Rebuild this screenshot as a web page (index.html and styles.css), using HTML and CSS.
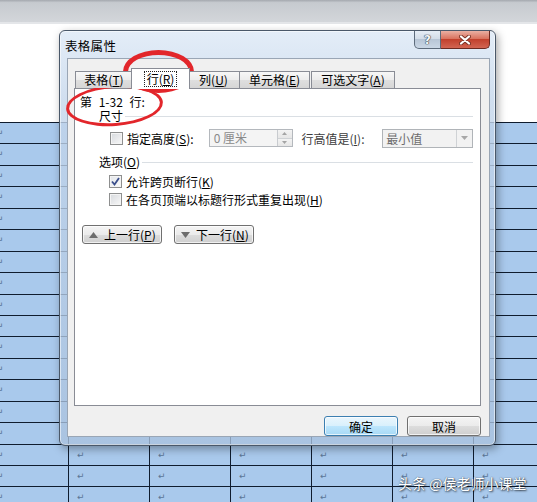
FILE: index.html
```html
<!DOCTYPE html>
<html lang="zh-CN">

<head>
    <meta charset="UTF-8">
    <meta name="viewport" content="width=device-width, initial-scale=1.0">
    <title>表格属性</title>
    <link rel="stylesheet" href="styles.css">
</head>

<body>
    <div class="screen">
        <div class="ribbon"></div>
        <div class="doc-top"></div>

        <!-- only the cell marks outside the dialog are visible -->
        <div class="doc-table">
            <div class="row"><span>↵</span><span></span><span></span><span></span><span></span><span></span><span></span></div>
            <div class="row"><span>↵</span><span></span><span></span><span></span><span></span><span></span><span></span></div>
            <div class="row"><span>↵</span><span></span><span></span><span></span><span></span><span></span><span></span></div>
            <div class="row"><span>↵</span><span></span><span></span><span></span><span></span><span></span><span></span></div>
            <div class="row"><span>↵</span><span></span><span></span><span></span><span></span><span></span><span></span></div>
            <div class="row"><span>↵</span><span></span><span></span><span></span><span></span><span></span><span></span></div>
            <div class="row"><span>↵</span><span></span><span></span><span></span><span></span><span></span><span></span></div>
            <div class="row"><span>↵</span><span></span><span></span><span></span><span></span><span></span><span></span></div>
            <div class="row"><span>↵</span><span></span><span></span><span></span><span></span><span></span><span></span></div>
            <div class="row"><span>↵</span><span></span><span></span><span></span><span></span><span></span><span></span></div>
            <div class="row"><span>↵</span><span></span><span></span><span></span><span></span><span></span><span></span></div>
            <div class="row"><span>↵</span><span></span><span></span><span></span><span></span><span></span><span></span></div>
            <div class="row"><span>↵</span><span></span><span></span><span></span><span></span><span></span><span></span></div>
            <div class="row"><span>↵</span><span></span><span></span><span></span><span></span><span></span><span></span></div>
            <div class="row"><span>↵</span><span></span><span></span><span></span><span></span><span></span><span></span></div>
            <div class="row"><span>↵</span><span>↵</span><span>↵</span><span>↵</span><span>↵</span><span>↵</span><span>↵</span></div>
            <div class="row"><span>↵</span><span>↵</span><span>↵</span><span>↵</span><span>↵</span><span>↵</span><span>↵</span></div>
            <div class="row"><span>↵</span><span>↵</span><span>↵</span><span>↵</span><span>↵</span><span>↵</span><span>↵</span></div>
        </div>

        <!-- table properties dialog -->
        <div class="dialog">
            <div class="title-bar">
                <span class="title">表格属性</span>
                <div class="title-buttons">
                    <span class="btn-help">?</span>
                    <span class="btn-close">
                        <svg width="12" height="10" viewBox="0 0 12 10">
                            <path d="M2 1.5 L10 8.5 M10 1.5 L2 8.5" stroke="#7a3326" stroke-width="4" stroke-linecap="round" />
                            <path d="M2 1.5 L10 8.5 M10 1.5 L2 8.5" stroke="#ffffff" stroke-width="2.2" stroke-linecap="round" />
                        </svg>
                    </span>
                </div>
            </div>

            <div class="frame">
                <div class="tabs">
                    <span class="tab tab-table">表格(<u>T</u>)</span>
                    <span class="tab tab-active"><span class="focus">行(<u>R</u>)</span></span>
                    <span class="tab tab-col">列(<u>U</u>)</span>
                    <span class="tab tab-cell">单元格(<u>E</u>)</span>
                    <span class="tab tab-alt">可选文字(<u>A</u>)</span>
                </div>

                <div class="tab-page">
                    <div class="range">第 1-32 行:</div>

                    <div class="group-head">尺寸</div>
                    <div class="field-row">
                        <span class="checkbox"></span>
                        <span class="label-height">指定高度(<u>S</u>):</span>
                        <span class="spin-input">
                            <span class="spin-value">0 厘米</span>
                            <span class="spin-arrows">
                                <span><svg width="5" height="3" viewBox="0 0 5 3"><path d="M0 3 L2.5 0 L5 3 Z" fill="#a4a4a4" /></svg></span>
                                <span><svg width="5" height="3" viewBox="0 0 5 3"><path d="M0 0 L2.5 3 L5 0 Z" fill="#a4a4a4" /></svg></span>
                            </span>
                        </span>
                        <span class="label-rule">行高值是(<u>I</u>):</span>
                        <span class="select">
                            <span class="select-value">最小值</span>
                            <span class="select-arrow"><svg width="7" height="4" viewBox="0 0 7 4"><path d="M0 0 L3.5 4 L7 0 Z" fill="#a8a8a8" /></svg></span>
                        </span>
                    </div>

                    <div class="group-head">选项(<u>O</u>)</div>
                    <div class="check-row first">
                        <span class="checkbox checked">
                            <svg width="11" height="11" viewBox="0 0 11 11"><path d="M2 5.5 L4.5 8.5 L9 2" fill="none" stroke="#3b4f8c" stroke-width="1.8" /></svg>
                        </span>
                        <span>允许跨页断行(<u>K</u>)</span>
                    </div>
                    <div class="check-row">
                        <span class="checkbox"></span>
                        <span>在各页顶端以标题行形式重复出现(<u>H</u>)</span>
                    </div>

                    <div class="nav-buttons">
                        <button class="nav-btn">
                            <svg width="9" height="6" viewBox="0 0 9 6"><path d="M0 6 L4.5 0 L9 6 Z" fill="#6d6d6d" /></svg>
                            <span>上一行(<u>P</u>)</span>
                        </button>
                        <button class="nav-btn">
                            <svg width="9" height="6" viewBox="0 0 9 6"><path d="M0 0 L4.5 6 L9 0 Z" fill="#6d6d6d" /></svg>
                            <span>下一行(<u>N</u>)</span>
                        </button>
                    </div>
                </div>

                <div class="dialog-buttons">
                    <button class="btn btn-default">确定</button>
                    <button class="btn">取消</button>
                </div>
            </div>
        </div>

        <!-- red hand-drawn marks -->
        <div class="mark mark-tab"></div>
        <div class="mark mark-rows"></div>

        <div class="watermark">头条 @侯老师小课堂</div>
    </div>
</body>

</html>
```

FILE: styles.css
```css
:root {
    --cell-blue: #a9c9ec;
    --grid-line: #0f1c2e;
    --tab-border: #898c95;
    --mark-red: #e2262b;
}

* {
    box-sizing: border-box;
    margin: 0;
    padding: 0;
}

body {
    font-family: "Noto Sans CJK SC", "DejaVu Sans", sans-serif;
    font-size: 12px;
    color: #000;
    background: #fff;
}

.screen {
    position: relative;
    width: 537px;
    height: 502px;
    overflow: hidden;
}

u {
    text-decoration: underline;
    text-underline-offset: 1px;
}

/* document behind the dialog */
.ribbon {
    height: 24px;
    background: linear-gradient(#a4a8ae, #c6cacf 12%, #d3d6da);
    border-bottom: 2px solid #e4e6e9;
}

.doc-top {
    height: 98px;
    background: #fff;
}

.doc-table {
    margin-left: -13px;
}

.row {
    display: flex;
    height: 21.45px;
    border-top: 1px solid var(--grid-line);
    background: var(--cell-blue);
}

.row span {
    width: 81px;
    flex: none;
    border-left: 1px solid var(--grid-line);
    padding: 4px 0 0 8px;
    font-family: "DejaVu Sans", sans-serif;
    font-size: 9px;
    line-height: 12px;
    color: #5b7696;
}

/* dialog */
.dialog {
    position: absolute;
    left: 59px;
    top: 30px;
    width: 437px;
    height: 416px;
    display: flex;
    flex-direction: column;
    border: 1px solid #4a5869;
    border-radius: 6px;
    background: linear-gradient(rgba(226, 236, 247, 0.95), rgba(196, 214, 235, 0.8) 70px, rgba(170, 194, 222, 0.78));
    box-shadow: inset 0 0 0 1px rgba(255, 255, 255, 0.55), 2px 3px 9px rgba(0, 0, 0, 0.35);
}

.title-bar {
    height: 27px;
    display: flex;
    align-items: flex-start;
    padding-left: 5px;
}

.title {
    margin-top: 8px;
    font-size: 12.5px;
    line-height: 14px;
    letter-spacing: 0.3px;
}

.title-buttons {
    margin-left: auto;
    margin-right: 5px;
    display: flex;
}

.btn-help,
.btn-close {
    height: 18px;
    display: flex;
    align-items: center;
    justify-content: center;
}

.btn-help {
    width: 27px;
    border: 1px solid #5d6b7b;
    border-top: none;
    border-radius: 0 0 0 5px;
    background: linear-gradient(#e6edf5, #d3dde8 45%, #b8c6d6 50%, #cad7e5);
    font-family: "DejaVu Sans", sans-serif;
    font-weight: bold;
    font-size: 12px;
    color: #f4f6f8;
    text-shadow: 0 0 1px #34404e, 0 0 1px #34404e, 0 0 1px #34404e;
}

.btn-close {
    width: 49px;
    border: 1px solid #6d2a21;
    border-top: none;
    border-left: none;
    border-radius: 0 0 5px 0;
    background: linear-gradient(#eab0a3, #d9735f 45%, #c2412d 50%, #d26552);
}

.frame {
    flex: 1;
    margin: 0 5px 8px 7px;
    padding: 9px 8px 0 6px;
    display: flex;
    flex-direction: column;
    background: #f0f0f0;
    border: 1px solid #9aa6b5;
}

/* tabs */
.tabs {
    display: flex;
    align-items: flex-end;
    height: 21px;
    padding-left: 1px;
    position: relative;
    z-index: 1;
}

.tab {
    height: 17px;
    margin-bottom: 1px;
    margin-left: -1px;
    display: flex;
    align-items: center;
    justify-content: center;
    border: 1px solid var(--tab-border);
    border-bottom: none;
    background: linear-gradient(#f7f7f7, #ececec 50%, #dfdfdf 50%, #d6d6d6);
    line-height: 14px;
    white-space: nowrap;
}

.tab-table {
    width: 58px;
    margin-left: 0;
}

.tab-active {
    width: 59px;
    height: 21px;
    margin: 0 -2px 0 -2px;
    background: #fff;
    position: relative;
    z-index: 2;
}

.tab-col {
    width: 53px;
}

.tab-cell {
    width: 71px;
}

.tab-alt {
    width: 84px;
    margin-left: 1px;
}

.focus {
    padding: 0 2px;
    outline: 1px dotted #222;
    outline-offset: 0;
}

.tab-page {
    height: 318px;
    margin-top: -1px;
    padding: 6px 7px 0 5px;
    background: #fff;
    border: 1px solid var(--tab-border);
}

.range {
    line-height: 14px;
    font-size: 12px;
    word-spacing: 4px;
}

.group-head {
    display: flex;
    align-items: center;
    margin-left: 19px;
    line-height: 14px;
}

.group-head::after {
    content: "";
    flex: 1;
    height: 1px;
    margin-left: 2px;
    background: #dadfe4;
}

.group-head+.check-row,
.field-row+.group-head {
    margin-top: 8px;
}

.field-row {
    display: flex;
    align-items: center;
    height: 18px;
    margin-top: 6px;
}

.field-row .checkbox {
    margin-left: 30px;
}

.checkbox {
    width: 13px;
    height: 13px;
    flex: none;
    display: flex;
    align-items: center;
    justify-content: center;
    border: 1px solid #8e8f8f;
    background: linear-gradient(135deg, #d6d9dd, #f8f8f8);
    box-shadow: inset 0 0 0 1px #f4f4f4;
}

.checkbox.checked {
    background: linear-gradient(135deg, #e2e5e9, #fbfbfb);
}

.label-height {
    width: 82px;
    margin-left: 4px;
    white-space: nowrap;
}

.spin-input {
    width: 84px;
    height: 18px;
    display: flex;
    border: 1px solid #b4b8bd;
    background: #f4f4f4;
}

.spin-value {
    flex: 1;
    padding-left: 4px;
    line-height: 16px;
    color: #8a8a8a;
}

.spin-arrows {
    width: 15px;
    display: flex;
    flex-direction: column;
    border-left: 1px solid #c8cbcf;
}

.spin-arrows span {
    flex: 1;
    display: flex;
    align-items: center;
    justify-content: center;
    background: linear-gradient(#f3f3f3, #e6e6e6);
}

.spin-arrows span+span {
    border-top: 1px solid #cfd2d5;
}

.label-rule {
    width: 81px;
    margin-left: 9px;
    color: #3c3c3c;
    white-space: nowrap;
}

.select {
    width: 91px;
    height: 19px;
    display: flex;
    border: 1px solid #b0b4b8;
    background: #f2f2f2;
}

.select-value {
    flex: 1;
    padding-left: 3px;
    line-height: 17px;
    color: #6d6d6d;
}

.select-arrow {
    width: 16px;
    display: flex;
    align-items: center;
    justify-content: center;
    border-left: 1px solid #cfd2d5;
}

.check-row {
    display: flex;
    align-items: center;
    height: 14px;
    margin-top: 4px;
    padding-left: 29px;
    gap: 4px;
}

.check-row.first {
    margin-top: 5px;
}

.nav-buttons {
    display: flex;
    gap: 12px;
    margin-top: 19px;
    margin-left: 2px;
}

.nav-btn,
.btn {
    font-family: inherit;
    font-size: 12px;
    color: #000;
    border: 1px solid #707070;
    border-radius: 3px;
    background: linear-gradient(#f4f4f4, #ebebeb 50%, #dddddd 50%, #cfcfcf);
    box-shadow: inset 0 0 0 1px rgba(255, 255, 255, 0.7);
}

.nav-btn {
    width: 80px;
    height: 19px;
    display: flex;
    align-items: center;
    gap: 6px;
    padding-left: 6px;
}

.dialog-buttons {
    display: flex;
    justify-content: flex-end;
    gap: 9px;
    margin-top: 10px;
}

.btn {
    width: 74px;
    height: 20px;
}

.btn-default {
    border-color: #3c7fb1;
    background: linear-gradient(#eaf6fd, #d9f0fc 50%, #bee6fd 50%, #a7d9f5);
}

/* red hand-drawn marks */
.mark {
    position: absolute;
    border: 5px solid var(--mark-red);
    border-radius: 50%;
}

.mark-tab {
    left: 123px;
    top: 50px;
    width: 71px;
    height: 43px;
}

.mark-rows {
    left: 66px;
    top: 85px;
    width: 97px;
    height: 41px;
    border-width: 3.5px;
    transform: rotate(-4deg);
}

.watermark {
    position: absolute;
    left: 398px;
    top: 474px;
    font-size: 14px;
    line-height: 18px;
    color: #fff;
    white-space: nowrap;
    text-shadow: 1px 1px 2px rgba(0, 0, 0, 0.7), 0 0 1px rgba(0, 0, 0, 0.6);
}
```
